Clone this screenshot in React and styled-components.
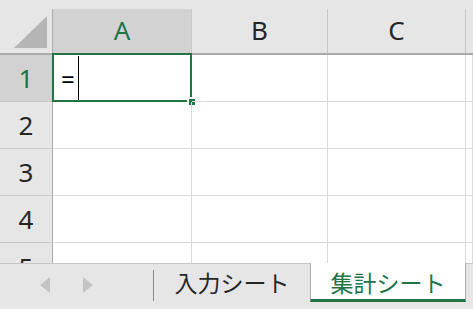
import styled, { createGlobalStyle } from 'styled-components';

const GlobalStyle = createGlobalStyle`
  html, body {
    margin: 0;
    padding: 0;
    background: #ffffff;
  }
  body {
    font-family: "Noto Sans", "Noto Sans CJK JP", sans-serif;
  }
`;

const COLS = '53px 139px 136px 138px 1fr';

const Window = styled.div`
  width: 473px;
  height: 309px;
  display: flex;
  flex-direction: column;
  overflow: hidden;
  background: #fff;
`;

const Sheet = styled.div`
  flex: 1;
  min-height: 0;
  overflow: hidden;
`;

const HeaderRow = styled.div`
  display: grid;
  grid-template-columns: ${COLS};
  height: 55px;
  box-sizing: border-box;
  background: #e6e6e6;
  border-bottom: 2px solid #ababab;
`;

const Corner = styled.div`
  position: relative;
  border-right: 1px solid #ababab;
  margin-top: 9px;
  svg {
    position: absolute;
    left: 14px;
    top: 7px;
  }
`;

const ColHeader = styled.div`
  margin-top: 9px;
  display: flex;
  align-items: center;
  justify-content: center;
  border-right: 1px solid ${(p) => (p.$last ? 'transparent' : '#c8c8c8')};
  background: ${(p) => (p.$active ? '#d2d2d2' : '#e6e6e6')};
  color: ${(p) => (p.$active ? '#217346' : '#262626')};
  font-size: 26px;
  padding-bottom: 2px;
`;

const Row = styled.div`
  display: grid;
  grid-template-columns: ${COLS};
  height: 47px;
`;

const RowHeader = styled.div`
  display: flex;
  align-items: center;
  justify-content: center;
  background: ${(p) => (p.$active ? '#d2d2d2' : '#e6e6e6')};
  color: ${(p) => (p.$active ? '#217346' : '#262626')};
  border-right: 1px solid #ababab;
  border-bottom: 1px solid #c8c8c8;
  font-size: 26px;
  line-height: 1;
  overflow: hidden;
  align-items: ${(p) => (p.$cut ? 'flex-start' : 'center')};
  padding-top: ${(p) => (p.$cut ? '11px' : '0')};
`;

const Cell = styled.div`
  position: relative;
  border-right: 1px solid #dadada;
  border-bottom: 1px solid #dadada;
  display: flex;
  align-items: center;
  font-size: 24px;
  color: #000;
`;

const Selection = styled.div`
  position: absolute;
  top: -2px;
  left: -1px;
  right: -1px;
  bottom: -1px;
  border: 2px solid #217346;
  pointer-events: none;
`;

const FillHandle = styled.div`
  position: absolute;
  right: -5px;
  bottom: -5px;
  width: 6px;
  height: 6px;
  background: #217346;
  border-left: 2px solid #fff;
  border-top: 2px solid #fff;
`;

const Entry = styled.span`
  display: flex;
  align-items: center;
  padding-left: 8px;
  height: 100%;
`;

const Caret = styled.span`
  width: 1px;
  height: 44px;
  background: #000;
  margin-left: 3px;
`;

const TabBar = styled.div`
  height: 46px;
  flex-shrink: 0;
  display: flex;
  align-items: stretch;
  background: #e6e6e6;
  border-top: 1px solid #c6c6c6;
  box-sizing: border-box;
`;

const Nav = styled.div`
  width: 153px;
  display: flex;
  align-items: center;
  padding-left: 40px;
  gap: 33px;
  box-sizing: border-box;
  padding-bottom: 4px;
`;

const Divider = styled.div`
  width: 1px;
  height: 31px;
  margin-top: 6px;
  background: #8a8a8a;
`;

const Tab = styled.div`
  display: flex;
  align-items: center;
  justify-content: center;
  height: 39px;
  box-sizing: border-box;
  font-family: "Noto Sans CJK JP", sans-serif;
  font-size: 23px;
  width: ${(p) => (p.$active ? '156px' : '156px')};
  color: ${(p) => (p.$active ? '#217346' : '#262626')};
  background: ${(p) => (p.$active ? '#ffffff' : 'transparent')};
  border-left: 1px solid ${(p) => (p.$active ? '#b0b0b0' : 'transparent')};
  border-right: 1px solid ${(p) => (p.$active ? '#b0b0b0' : 'transparent')};
  border-bottom: 3px solid ${(p) => (p.$active ? '#217346' : 'transparent')};
  margin-top: -1px;
  padding-top: 2px;
`;

const Arrow = ({ dir }) => (
  <svg width="10" height="16" viewBox="0 0 10 16">
    {dir === 'left' ? (
      <polygon points="10,0 10,16 0,8" fill="#c4c4c4" />
    ) : (
      <polygon points="0,0 0,16 10,8" fill="#c4c4c4" />
    )}
  </svg>
);

const cols = ['A', 'B', 'C'];

export default function App() {
  return (
    <Window>
      <GlobalStyle />
      <Sheet>
        <HeaderRow>
          <Corner>
            <svg width="34" height="33" viewBox="0 0 34 33">
              <polygon points="0,32 33,32 33,0" fill="#b5b5b5" />
            </svg>
          </Corner>
          {cols.map((c) => (
            <ColHeader key={c} $active={c === 'A'}>
              {c}
            </ColHeader>
          ))}
          <ColHeader $last />
        </HeaderRow>
        {[1, 2, 3, 4, 5].map((r) => (
          <Row key={r}>
            <RowHeader $active={r === 1} $cut={r === 5}>
              {r}
            </RowHeader>
            <Cell>
              {r === 1 && (
                <>
                  <Entry>
                    =<Caret />
                  </Entry>
                  <Selection>
                    <FillHandle />
                  </Selection>
                </>
              )}
            </Cell>
            <Cell />
            <Cell />
            <Cell />
          </Row>
        ))}
      </Sheet>
      <TabBar>
        <Nav>
          <Arrow dir="left" />
          <Arrow dir="right" />
        </Nav>
        <Divider />
        <Tab>入力シート</Tab>
        <Tab $active>集計シート</Tab>
      </TabBar>
    </Window>
  );
}
